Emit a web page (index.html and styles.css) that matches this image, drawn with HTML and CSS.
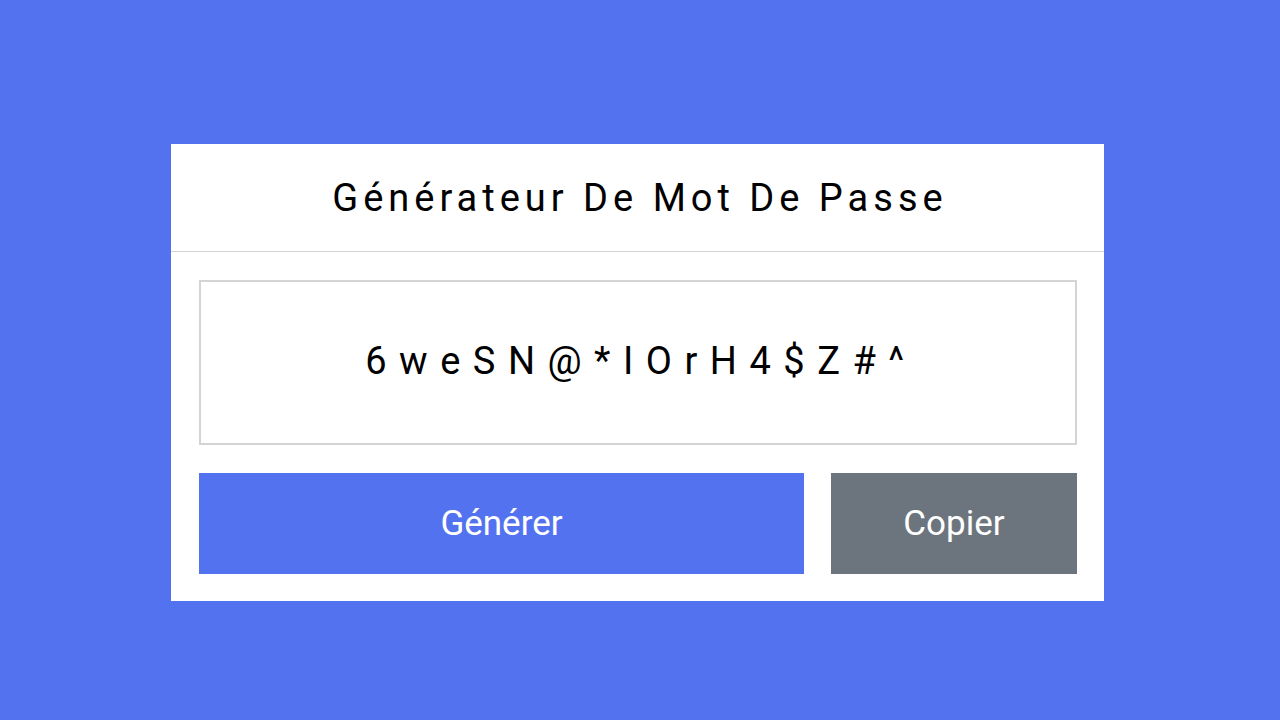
FILE: index.html
```html
<!DOCTYPE html>
<html lang="fr">
<head>
<meta charset="utf-8">
<title>Générateur De Mot De Passe</title>
<link rel="stylesheet" href="styles.css">
</head>
<body>
<div class="page">
  <div class="card">
    <div class="card-header">
      <h1 class="title">Générateur De Mot De Passe</h1>
    </div>
    <div class="card-body">
      <div class="password">6weSN@*IOrH4$Z#^</div>
      <div class="actions">
        <button class="btn btn-generate">Générer</button>
        <button class="btn btn-copy">Copier</button>
      </div>
    </div>
  </div>
</div>
</body>
</html>
```
FILE: styles.css
```css
html, body {
  margin: 0;
  padding: 0;
}
body {
  background: #5372f0;
  font-family: Roboto, "Noto Sans", sans-serif;
}
.page {
  width: 1280px;
  height: 720px;
  display: flex;
  align-items: flex-start;
  justify-content: flex-start;
  padding: 144px 0 0 171px;
  box-sizing: border-box;
}
.card {
  width: 933px;
  height: 457px;
  background: #fff;
  display: flex;
  flex-direction: column;
}
.card-header {
  height: 107px;
  border-bottom: 1px solid #d2d2d2;
  display: flex;
  align-items: center;
  justify-content: center;
}
.title {
  margin: 0;
  font-size: 38px;
  font-weight: 400;
  letter-spacing: 5px;
  color: #000;
  padding-left: 5px;
}
.card-body {
  padding: 28px 27px 27px 28px;
  display: flex;
  flex-direction: column;
  gap: 28px;
}
.password {
  height: 165px;
  box-sizing: border-box;
  border: 2px solid #d4d4d4;
  display: flex;
  align-items: center;
  justify-content: center;
  font-size: 38px;
  letter-spacing: 12.5px;
  padding-left: 6px;
  padding-bottom: 4px;
  color: #000;
}
.actions {
  display: flex;
  gap: 27px;
}
.btn {
  height: 101px;
  border: none;
  color: #fff;
  font-family: Roboto, "Noto Sans", sans-serif;
  font-size: 35px;
  padding: 0;
}
.btn-generate {
  width: 605px;
  background: #5372f0;
}
.btn-copy {
  width: 246px;
  background: #6c757d;
}
```
